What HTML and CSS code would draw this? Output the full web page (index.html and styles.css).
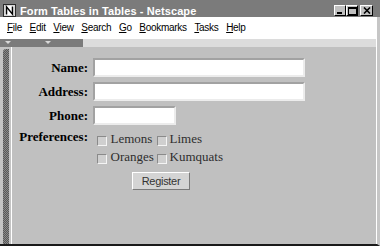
FILE: index.html
```html
<!DOCTYPE html>
<html lang="en">
<head>
  <meta charset="UTF-8">
  <meta name="viewport" content="width=device-width, initial-scale=1.0">
  <title>Form Tables in Tables - Netscape</title>
  <link rel="stylesheet" href="styles.css">
</head>
<body>
  <div class="window">
    <div class="titlebar">
      <span class="app-icon">
        <svg width="13" height="13" viewBox="0 0 13 13">
          <rect x="0.5" y="0.5" width="12" height="12" fill="#d8d8d8" stroke="#2a2a2a"/>
          <rect x="2" y="2" width="9" height="9" fill="#fff"/>
          <path d="M3.5 10.5V2.8l6 7.4V2.5" fill="none" stroke="#000" stroke-width="1.5"/>
        </svg>
      </span>
      <span class="title">Form Tables in Tables - Netscape</span>
      <div class="caption-buttons">
        <span class="cap-btn">
          <svg width="8" height="7"><rect x="1" y="5" width="5" height="2" fill="#000"/></svg>
        </span>
        <span class="cap-btn">
          <svg width="9" height="8"><rect x="0.5" y="0.5" width="8" height="7" fill="none" stroke="#000"/><rect x="0" y="0" width="9" height="2" fill="#000"/></svg>
        </span>
        <span class="cap-btn close">
          <svg width="8" height="7"><path d="M1 0.5L7 6.5M7 0.5L1 6.5" stroke="#000" stroke-width="1.6"/></svg>
        </span>
      </div>
    </div>

    <div class="frame">
      <div class="menubar">
        <span><u>F</u>ile</span>
        <span><u>E</u>dit</span>
        <span><u>V</u>iew</span>
        <span><u>S</u>earch</span>
        <span><u>G</u>o</span>
        <span><u>B</u>ookmarks</span>
        <span><u>T</u>asks</span>
        <span><u>H</u>elp</span>
      </div>

      <div class="toolstrip">
        <div class="strip-tab">
          <span class="drop"></span>
          <span class="drop"></span>
        </div>
        <div class="strip-rest"></div>
      </div>

      <div class="main">
        <div class="sidebar"><div class="grip"></div></div>
        <div class="content">
          <form class="regform">
            <label class="field-label" for="name">Name:</label>
            <input id="name" class="text-input wide" type="text">

            <label class="field-label" for="address">Address:</label>
            <input id="address" class="text-input wide" type="text">

            <label class="field-label" for="phone">Phone:</label>
            <input id="phone" class="text-input short" type="text">

            <span class="field-label top">Preferences:</span>
            <div class="prefs">
              <input type="checkbox" class="check" id="lemons">
              <label class="opt" for="lemons">Lemons</label>
              <input type="checkbox" class="check inner" id="limes">
              <label class="opt" for="limes">Limes</label>

              <input type="checkbox" class="check" id="oranges">
              <label class="opt" for="oranges">Oranges</label>
              <input type="checkbox" class="check inner" id="kumquats">
              <label class="opt" for="kumquats">Kumquats</label>

              <button type="button" class="register">Register</button>
            </div>
          </form>
        </div>
      </div>
    </div>
  </div>
</body>
</html>
```

FILE: styles.css
```css
body {
  margin: 0;
  background-color: #c0c0c0;
  font-family: "Liberation Sans", Arial, sans-serif;
}

.window {
  width: 380px;
  height: 246px;
  display: flex;
  flex-direction: column;
  background-color: #c0c0c0;
  overflow: hidden;
}

/* title bar */
.titlebar {
  height: 17px;
  box-sizing: border-box;
  padding: 4px 7px 0 3px;
  display: flex;
  align-items: center;
  background-color: #7b7b7b;
  color: #fff;
  flex: none;
}

.app-icon {
  display: flex;
  margin-right: 4px;
}

.title {
  font-weight: bold;
  font-size: 11px;
  letter-spacing: 0.1px;
  white-space: nowrap;
}

.caption-buttons {
  margin-left: auto;
  display: flex;
}

.cap-btn {
  width: 12px;
  height: 11px;
  box-sizing: border-box;
  display: flex;
  align-items: center;
  justify-content: center;
  background-color: #c0c0c0;
  border: 1px solid;
  border-color: #fff #000 #000 #fff;
}

.cap-btn.close {
  width: 13px;
  margin-left: 2px;
}

/* everything under the title bar */
.frame {
  flex: 1;
  display: flex;
  flex-direction: column;
  border-right: 3px solid #c6c6c6;
  border-bottom: 2px solid #1a1a1a;
}

.menubar {
  height: 22px;
  box-sizing: border-box;
  padding: 0 0 1px 7px;
  display: flex;
  align-items: center;
  gap: 7.7px;
  background-color: #fff;
  font-size: 10px;
  letter-spacing: -0.3px;
  color: #000;
  flex: none;
}

.toolstrip {
  height: 8px;
  display: flex;
  flex: none;
  background-color: #fff;
}

.strip-tab {
  width: 83px;
  padding: 2px 0 0 5px;
  box-sizing: border-box;
  display: flex;
  align-items: flex-start;
  gap: 34px;
  background-color: #7b7b7b;
}

.drop {
  width: 0;
  height: 0;
  border-left: 3px solid transparent;
  border-right: 3px solid transparent;
  border-top: 3px solid #d8d8d8;
}

.strip-rest {
  flex: 1;
  margin-right: 1px;
  background-color: #dcdcdc;
}

.main {
  flex: 1;
  display: flex;
  border-right: 1px solid #fff;
}

.sidebar {
  width: 6px;
  padding: 0 2px 0 3px;
  display: flex;
  background-color: #c4c4c4;
  border-right: 1px solid #fff;
  flex: none;
}

.grip {
  flex: 1;
  margin-top: 2px;
  border-radius: 3px 0 0 0;
  background: repeating-conic-gradient(#565656 0 25%, #8a8a8a 0 50%) 0 0 / 2px 2px;
}

.content {
  flex: 1;
  padding-top: 11px;
  background-color: #c0c0c0;
}

/* the form */
.regform {
  display: grid;
  grid-template-columns: 76px auto;
  column-gap: 5px;
  row-gap: 5px;
  align-items: center;
  justify-items: start;
  margin: 0;
}

.field-label {
  justify-self: end;
  font-family: "Liberation Serif", "Times New Roman", serif;
  font-weight: bold;
  font-size: 13px;
  color: #000;
}

.field-label.top {
  align-self: start;
  line-height: 13px;
}

.text-input {
  height: 19px;
  box-sizing: border-box;
  margin: 0;
  padding: 0 2px;
  border: 2px solid;
  border-color: #a2a2a2 #ececec #ececec #a2a2a2;
  background-color: #fff;
  font: 12px "Liberation Sans", sans-serif;
}

.text-input.wide {
  width: 212px;
}

.text-input.short {
  width: 83px;
}

.prefs {
  display: grid;
  grid-template-columns: 16px 48px 11px auto;
  grid-auto-rows: 18px;
  align-items: start;
  padding-top: 2px;
}

.check {
  appearance: none;
  width: 10px;
  height: 10px;
  margin: 4px 0 0 4px;
  box-sizing: border-box;
  border: 1px solid;
  border-color: #8a8a8a #f4f4f4 #f4f4f4 #8a8a8a;
  background-color: #cfcfcf;
}

.check.inner {
  margin-left: 0;
}

.opt {
  padding-left: 1.5px;
  font-family: "Liberation Serif", "Times New Roman", serif;
  font-size: 13px;
  line-height: 14px;
  color: #2e2e2e;
  white-space: nowrap;
}

.register {
  grid-column: 1 / -1;
  justify-self: start;
  width: 58px;
  height: 18px;
  margin: 4px 0 0 39px;
  padding: 0;
  border: 1px solid;
  border-color: #fff #7a7a7a #7a7a7a #fff;
  background-color: #d4d4d4;
  color: #333;
  font-family: "Liberation Sans", sans-serif;
  font-size: 11px;
  letter-spacing: -0.3px;
}
```
